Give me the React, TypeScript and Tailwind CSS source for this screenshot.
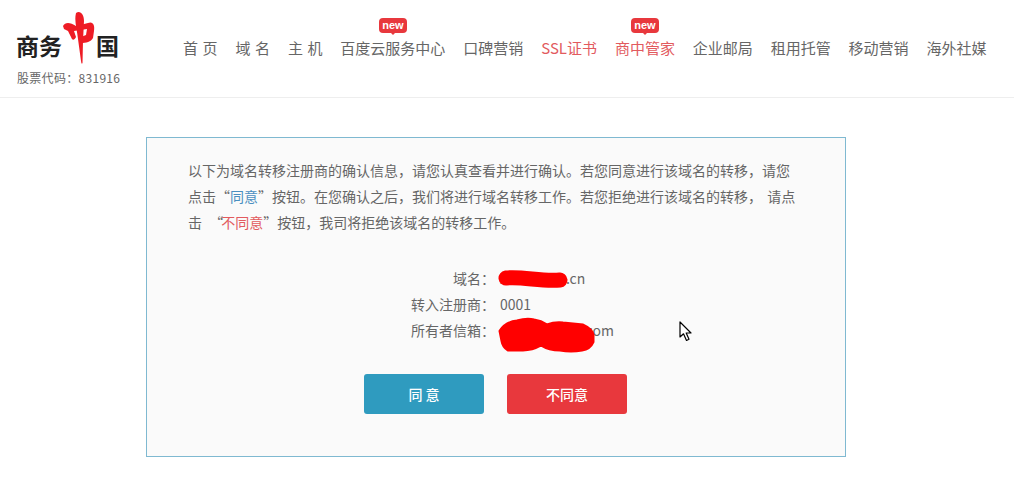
const navItems = [
  { label: "首 页" },
  { label: "域 名" },
  { label: "主 机" },
  { label: "百度云服务中心", isNew: true },
  { label: "口碑营销" },
  { label: "SSL证书", red: true },
  { label: "商中管家", red: true, isNew: true },
  { label: "企业邮局" },
  { label: "租用托管" },
  { label: "移动营销" },
  { label: "海外社媒" },
];

function Logo() {
  return (
    <div className="w-[183px] shrink-0 pl-4">
      <div className="flex h-[53px] items-end">
        <span className="pb-[4px] text-[23px] leading-[28px] font-bold text-[#222]">商务</span>
        <svg viewBox="0 0 34 54" className="-mb-[2px] h-[54px] w-[34px] shrink-0 text-[#ee1c25]" fill="currentColor">
          <path d="M14 2C18-1 22 3 22 10L21 30 20.500 52Q19.500 54 19 50L16 28C15 18 12 10 14 2Z" />
          <path d="M1 15C3 11 8 11 14 15L26 12C31 10 33 14 32 20L31 27C29 31 24 32 19 32L19 26 24 24 25 18 12 20 14 26C12 30 10 29 9 26L6 20 2 18Z" />
        </svg>
        <span className="pb-[4px] text-[23px] leading-[28px] font-bold text-[#222]">国</span>
      </div>
      <div className="mt-[7px] pl-px text-xs leading-4 tracking-[0.3px] whitespace-nowrap text-[#666]">股票代码：831916</div>
    </div>
  );
}

function NavItem({ label, red, isNew }: { label: string; red?: boolean; isNew?: boolean }) {
  return (
    <a className={`relative text-[15px] leading-5 whitespace-nowrap [word-spacing:1.2px] ${red ? "text-[#e25a5e]" : "text-[#666]"}`}>
      {isNew && (
        <span className="absolute -top-[20px] left-1/2 h-[15px] w-7 -translate-x-1/2 rounded-sm bg-[#e8383d] text-center font-['Liberation_Sans'] text-[11px] leading-[14px] font-bold text-white">
          new
          <span className="absolute top-full left-1/2 -ml-[2px] border-x-2 border-t-2 border-x-transparent border-t-[#e8383d]" />
        </span>
      )}
      {label}
    </a>
  );
}

function InfoRow({ label, value }: { label: string; value: string }) {
  return (
    <div className="flex h-[26px] items-center text-sm text-[#666]">
      <span className="w-[353px] pr-[5px] text-right">{label}</span>
      <span>{value}</span>
    </div>
  );
}

export default function App() {
  return (
    <div
      lang="zh-CN"
      className="relative min-h-[480px] bg-white"
      style={{ fontFamily: '"Noto Sans CJK SC", "Noto Sans", sans-serif' }}
    >
      <header className="flex h-[98px] border-b border-[#eee] pt-[10px]">
        <Logo />
        <nav className="flex h-[76px] items-center gap-[17.9px]">
          {navItems.map((item) => (
            <NavItem key={item.label} {...item} />
          ))}
        </nav>
      </header>

      <div className="mt-[39px] ml-[146px] h-[320px] w-[700px] border border-[#7fb9d1] bg-[#fafafa] pt-[19px]">
        <p className="pl-[41px] text-sm leading-[26px] whitespace-nowrap text-[#666]">
          以下为域名转移注册商的确认信息，请您认真查看并进行确认。若您同意进行该域名的转移，请您
          <br />
          点击“<span className="text-[#4a8fc0]">同意</span>”按钮。在您确认之后，我们将进行域名转移工作。若您拒绝进行该域名的转移， <span className="ml-[2px]">请点</span>
          <br />
          击 <span className="ml-[4px]">“</span><span className="-ml-[2px] text-[#e25a5e]">不同意</span>”按钮，我司将拒绝该域名的转移工作。
        </p>

        <div className="relative mt-[30px]">
          <InfoRow label="域名：" value="xxxxxxxnn.cn" />
          <InfoRow label="转入注册商：" value="0001" />
          <InfoRow label="所有者信箱：" value="xxxxxxxxxnw.com" />
          {/* scribbled out in the screenshot */}
          <svg viewBox="0 0 130 90" className="absolute top-0 left-[350px] h-[90px] w-[130px]" fill="#ff0000" stroke="#ff0000" strokeLinecap="round" strokeLinejoin="round">
            <path d="M9 13C25 11 45 17 63 15" fill="none" strokeWidth="15" />
            <path d="M3 66Q9 57 20 56 30 53 37 55 44 56 50 60 58 57 66 58L86 60Q95 64 96 70L96 77Q93 84 85 85 74 87 63 85 52 85 44 80 35 85 26 85L11 85Q6 82 5 76Z" strokeWidth="3" />
          </svg>
        </div>

        <div className="mt-[31px] flex gap-[23px] pl-[217px]">
          <button className="h-10 w-[120px] rounded-[3px] bg-[#2f9bbf] text-sm font-medium text-white">同 意</button>
          <button className="h-10 w-[120px] rounded-[3px] bg-[#e8383d] text-sm font-medium text-white">不同意</button>
        </div>
      </div>

      {/* mouse pointer */}
      <svg viewBox="0 0 14 21" className="absolute top-[321px] left-[679px] h-[21px] w-[14px]" fill="#fff" stroke="#000" strokeWidth="1.200" strokeLinejoin="round">
        <path d="M1 1V16L4.500 12.800 7.500 19.500 10 18.300 7.200 12H12Z" />
      </svg>
    </div>
  );
}
